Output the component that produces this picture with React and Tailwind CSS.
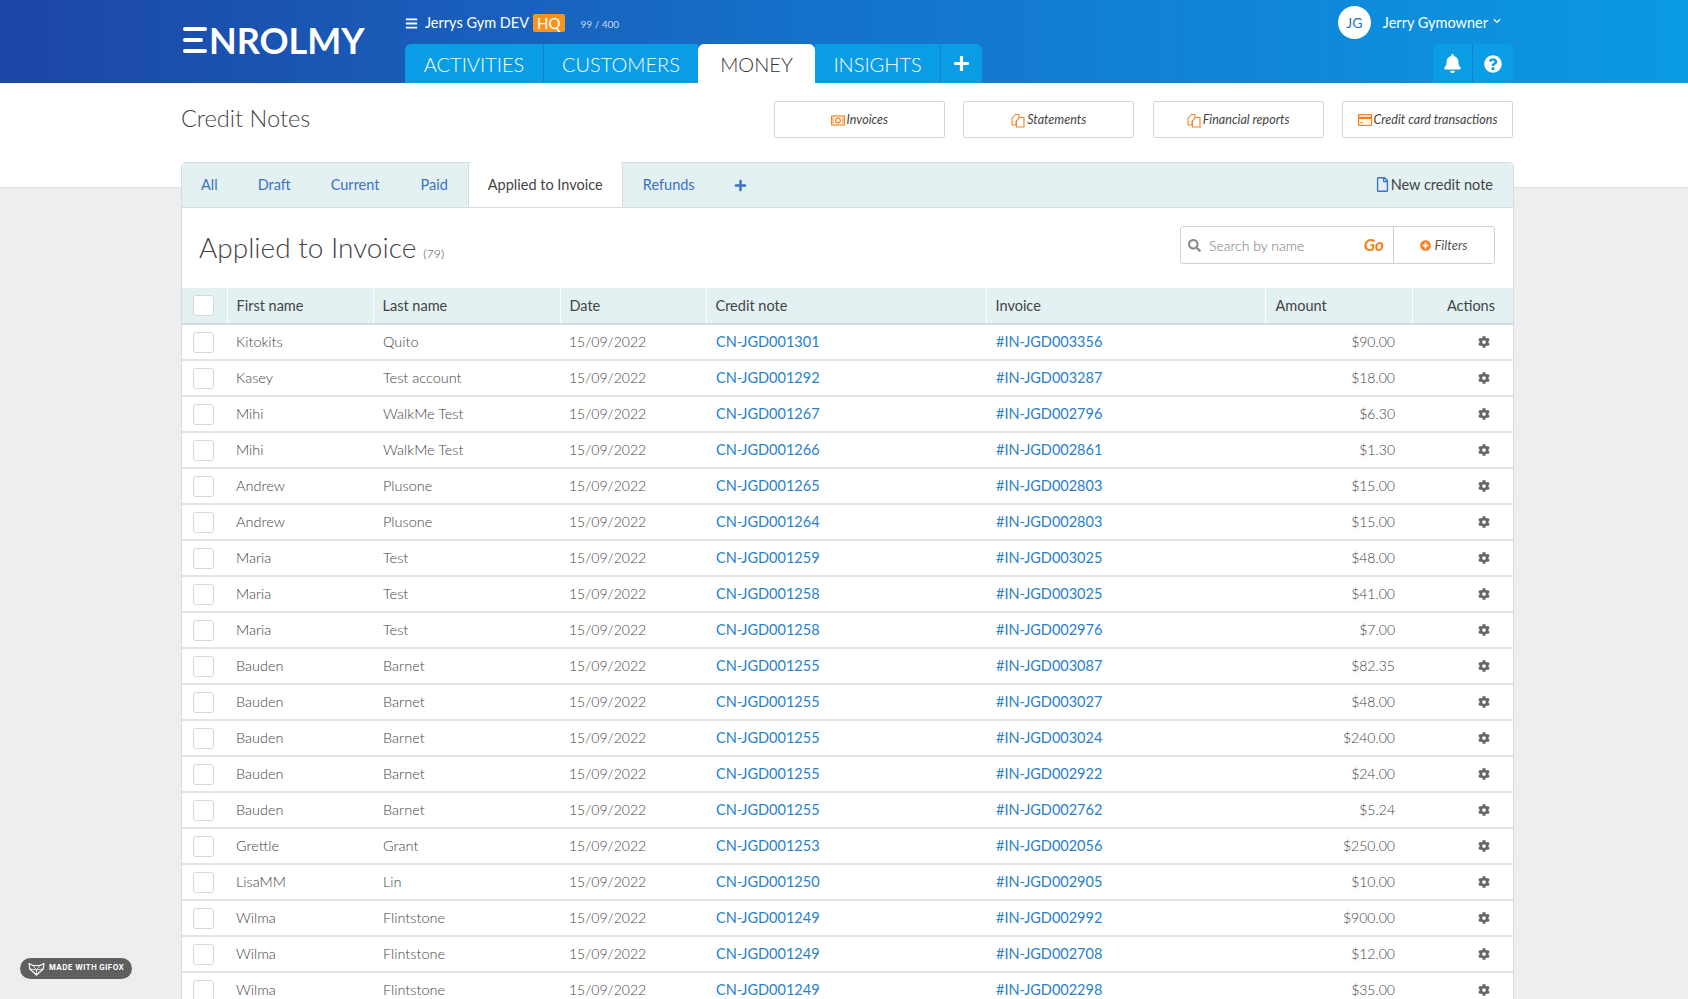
import React from 'react';
import { FaBars, FaBell, FaQuestionCircle, FaPlus, FaCog, FaSearch, FaPlusCircle, FaRegFile, FaChevronDown } from 'react-icons/fa';

const rows = [
  ['Kitokits', 'Quito', 'CN-JGD001301', '#IN-JGD003356', '$90.00'],
  ['Kasey', 'Test account', 'CN-JGD001292', '#IN-JGD003287', '$18.00'],
  ['Mihi', 'WalkMe Test', 'CN-JGD001267', '#IN-JGD002796', '$6.30'],
  ['Mihi', 'WalkMe Test', 'CN-JGD001266', '#IN-JGD002861', '$1.30'],
  ['Andrew', 'Plusone', 'CN-JGD001265', '#IN-JGD002803', '$15.00'],
  ['Andrew', 'Plusone', 'CN-JGD001264', '#IN-JGD002803', '$15.00'],
  ['Maria', 'Test', 'CN-JGD001259', '#IN-JGD003025', '$48.00'],
  ['Maria', 'Test', 'CN-JGD001258', '#IN-JGD003025', '$41.00'],
  ['Maria', 'Test', 'CN-JGD001258', '#IN-JGD002976', '$7.00'],
  ['Bauden', 'Barnet', 'CN-JGD001255', '#IN-JGD003087', '$82.35'],
  ['Bauden', 'Barnet', 'CN-JGD001255', '#IN-JGD003027', '$48.00'],
  ['Bauden', 'Barnet', 'CN-JGD001255', '#IN-JGD003024', '$240.00'],
  ['Bauden', 'Barnet', 'CN-JGD001255', '#IN-JGD002922', '$24.00'],
  ['Bauden', 'Barnet', 'CN-JGD001255', '#IN-JGD002762', '$5.24'],
  ['Grettle', 'Grant', 'CN-JGD001253', '#IN-JGD002056', '$250.00'],
  ['LisaMM', 'Lin', 'CN-JGD001250', '#IN-JGD002905', '$10.00'],
  ['Wilma', 'Flintstone', 'CN-JGD001249', '#IN-JGD002992', '$900.00'],
  ['Wilma', 'Flintstone', 'CN-JGD001249', '#IN-JGD002708', '$12.00'],
  ['Wilma', 'Flintstone', 'CN-JGD001249', '#IN-JGD002298', '$35.00'],
];

const InvoiceIcon = () => (
  <svg width="14" height="11" viewBox="0 0 14 11" fill="none" stroke="#f58220" strokeWidth="1.2">
    <rect x="0.6" y="1" width="12.8" height="9" />
    <circle cx="7" cy="5.5" r="2.4" />
    <path d="M2.2 2.6v5.8M11.8 2.6v5.8" strokeWidth="0.9" />
  </svg>
);

const CopyIcon = () => (
  <svg width="14" height="15" viewBox="0 0 14 15" fill="none" stroke="#f58220" strokeWidth="1.1" strokeLinejoin="round">
    <path d="M1 5.5 4.5 1.5H8V5L5 8.5V12H1Z" />
    <path d="M5.5 8 8.5 4.5H13V14H5.5Z" fill="#fff" />
  </svg>
);

const CardIcon = () => (
  <svg width="14" height="12" viewBox="0 0 14 12">
    <rect x="0.6" y="0.6" width="12.8" height="10.8" fill="none" stroke="#f58220" strokeWidth="1.2" />
    <rect x="0.6" y="2.6" width="12.8" height="2.4" fill="#f58220" />
    <path d="M2.2 8.6h3" stroke="#f58220" strokeWidth="1" />
  </svg>
);

const FoxIcon = () => (
  <svg width="17" height="14" viewBox="0 0 17 14" fill="none" stroke="#fff" strokeWidth="1.2" strokeLinejoin="round">
    <path d="M1 1.5 5 3.5H12L16 1.5 15.2 7 8.5 13 1.8 7Z" />
    <path d="M5 3.5 8.5 8 12 3.5M1.8 7 8.5 8 15.2 7M8.5 8V13" strokeWidth="0.8" />
  </svg>
);

const Checkbox = () => (
  <span className="block w-[21px] h-[21px] rounded-[3px] bg-white border border-[#d5d8da]" />
);

const ActionButton = ({ icon, label }) => (
  <button className="flex items-center justify-center gap-[2px] w-[171px] h-[37px] pt-[1px] bg-white border border-[#d4d7d9] rounded-[2px] text-[12.5px] italic text-[#444]">
    {icon}
    <span>{label}</span>
  </button>
);

const NavTab = ({ label, active, className }) => (
  <div
    className={`flex items-center justify-center h-[39px] pt-[1px] text-[20px] font-light ${
      active ? 'bg-white text-[#333] rounded-t-[6px]' : 'bg-[#0a9de6] text-white'
    } ${className}`}
  >
    {label}
  </div>
);

export default function App() {
  return (
    <div className="relative h-[999px] overflow-hidden bg-[#eeeeee] text-[14.5px] font-['Lato','Liberation_Sans',sans-serif] text-[#444]">
      {/* top bar */}
      <header className="h-[83px] bg-gradient-to-r from-[#1c45a6] via-[#1473cb] to-[#0a9ae4]">
        <div className="flex h-full ml-[183px] w-[1330px]">
          <div className="flex items-center w-[222px] h-[79px] text-white text-[36px] leading-none font-bold">
            <span className="flex flex-col justify-between w-[24px] h-[26px] mr-[2px]">
              <span className="block h-[4px] rounded-full bg-white" />
              <span className="block h-[4px] w-[20px] rounded-full bg-white" />
              <span className="block h-[4px] rounded-full bg-white" />
            </span>
            <span>NROLMY</span>
          </div>
          <div className="flex flex-col justify-end">
            <div className="flex items-center h-[44px] pt-[2px] text-white text-[14.5px]">
              <FaBars className="text-[13px]" />
              <span className="ml-[7px]">Jerrys Gym DEV</span>
              <span className="ml-[4px] px-[4px] h-[18px] leading-[18px] rounded-[2px] bg-[#f7941d] text-[15px]">HQ</span>
              <span className="ml-[16px] mt-[3px] text-[10px] text-[#c5dcf3]">99 / 400</span>
            </div>
            <nav className="flex">
              <NavTab label="ACTIVITIES" className="w-[139px] rounded-tl-[6px] border-r border-[#1580c9]" />
              <NavTab label="CUSTOMERS" className="w-[154px]" />
              <NavTab label="MONEY" active className="w-[117px]" />
              <NavTab label="INSIGHTS" className="w-[126px] border-r border-[#1580c9]" />
              <div className="flex items-center justify-center w-[41px] h-[39px] bg-[#0a9de6] rounded-tr-[6px] text-white text-[17px]">
                <FaPlus />
              </div>
            </nav>
          </div>
          <div className="flex flex-col items-end justify-between ml-auto">
            <div className="flex items-center h-[44px] pt-[1px] mr-[12px] text-white">
              <span className="flex items-center justify-center w-[33px] h-[33px] rounded-full bg-white text-[#1b6fc4] text-[14px]">JG</span>
              <span className="ml-[12px] text-[14.5px] font-normal">Jerry Gymowner</span>
              <FaChevronDown className="ml-[5px] mb-[3px] text-[8px]" />
            </div>
            <div className="flex h-[39px] rounded-t-[6px] overflow-hidden bg-[#0a9de6] text-white">
              <div className="flex items-center justify-center w-[40px] border-r border-[#1580c9] text-[19px]">
                <FaBell />
              </div>
              <div className="flex items-center justify-center w-[40px] text-[18px]">
                <FaQuestionCircle />
              </div>
            </div>
          </div>
        </div>
      </header>

      {/* page title strip */}
      <div className="h-[105px] bg-white border-b border-[#e2e2e2]">
        <div className="flex items-start justify-between ml-[181px] w-[1332px] pt-[18px]">
          <h1 className="-mt-[1px] text-[23.6px] leading-[36px] font-light text-[#444]">Credit Notes</h1>
          <div className="flex gap-[18.4px]">
            <ActionButton icon={<InvoiceIcon />} label="Invoices" />
            <ActionButton icon={<CopyIcon />} label="Statements" />
            <ActionButton icon={<CopyIcon />} label="Financial reports" />
            <ActionButton icon={<CardIcon />} label="Credit card transactions" />
          </div>
        </div>
      </div>

      {/* card */}
      <main className="ml-[181px] w-[1333px] -mt-[26px] bg-white border-x border-t border-[#d5dcdf] rounded-t-[5px]">
        <div className="flex items-end h-[45px] bg-[#e3f1f2] border-b border-[#d5dcdf] rounded-t-[5px] text-[#3b72c4]">
          <div className="flex h-[45px] items-center">
            <span className="ml-[19px]">All</span>
            <span className="ml-[40px]">Draft</span>
            <span className="ml-[40px]">Current</span>
            <span className="ml-[41px]">Paid</span>
            <span className="flex items-center justify-center ml-[20px] w-[155px] h-[45px] bg-white border-x border-[#d5dcdf] rounded-t-[4px] text-[#444]">
              Applied to Invoice
            </span>
            <span className="ml-[20px]">Refunds</span>
            <FaPlus className="ml-[39px] text-[13px] mt-[2px]" />
          </div>
          <div className="flex items-center h-[45px] ml-auto mr-[20px] text-[#444]">
            <FaRegFile className="text-[#3b72c4] text-[15px] mr-[1px]" />
            <span>New credit note</span>
          </div>
        </div>

        <div className="flex items-center justify-between h-[80px] pl-[17px] pr-[18px]">
          <div className="flex items-baseline -mt-[2px]">
            <span className="text-[28px] font-light text-[#444]">Applied to Invoice</span>
            <span className="ml-[7px] text-[12.5px] font-light">(79)</span>
          </div>
          <div className="flex items-center w-[315px] h-[38px] mb-[6px] border border-[#cfd2d4] rounded-[3px]">
            <FaSearch className="ml-[7px] text-[13px] text-[#888]" />
            <span className="ml-[8px] text-[14px] font-light text-[#777]">Search by name</span>
            <span className="ml-auto mr-[9px] text-[17px] font-bold italic text-[#f58220]">Go</span>
            <span className="flex items-center justify-center gap-[3px] w-[101px] h-full pt-[1px] border-l border-[#cfd2d4] text-[13px] italic text-[#555]">
              <FaPlusCircle className="text-[#f58220] text-[11px]" />
              Filters
            </span>
          </div>
        </div>

        <table className="w-full table-fixed border-collapse">
          <thead>
            <tr className="h-[36px] bg-[#e3f1f2] text-left text-[#444] border-b-2 border-[#d5dcdf]">
              <th className="w-[45px] pl-[11px] font-normal border-r border-white"><Checkbox /></th>
              <th className="w-[146px] pl-[9px] font-normal border-r border-white">First name</th>
              <th className="w-[187px] pl-[9px] font-normal border-r border-white">Last name</th>
              <th className="w-[146px] pl-[9px] font-normal border-r border-white">Date</th>
              <th className="w-[280px] pl-[9px] font-normal border-r border-white">Credit note</th>
              <th className="w-[279px] pl-[9px] font-normal border-r border-white">Invoice</th>
              <th className="w-[147px] pl-[10px] font-normal border-r border-white">Amount</th>
              <th className="pr-[18px] font-normal text-right">Actions</th>
            </tr>
          </thead>
          <tbody className="font-light leading-[22px]">
            {rows.map((row, i) => (
              <tr key={i} className="h-[36px] border-b-2 border-[#e3e6e8]">
                <td className="pl-[11px]"><Checkbox /></td>
                <td className="pl-[9px]">{row[0]}</td>
                <td className="pl-[10px]">{row[1]}</td>
                <td className="pl-[9px] text-[14px]">15/09/2022</td>
                <td className="pl-[10px] text-[#2a80cc] font-normal">{row[2]}</td>
                <td className="pl-[10px] text-[#2a80cc] font-normal">{row[3]}</td>
                <td className="pr-[17px] text-right text-[14px]">{row[4]}</td>
                <td className="pr-[23px]">
                  <FaCog className="ml-auto text-[12px] text-[#666]" />
                </td>
              </tr>
            ))}
          </tbody>
        </table>
      </main>

      {/* watermark */}
      <div className="absolute left-[20px] top-[958px] flex items-center gap-[4px] w-[112px] h-[21px] pl-[8px] rounded-full bg-[#5f5f5f] text-white text-[7.3px] font-bold tracking-[0.5px] font-['Inter',sans-serif]">
        <FoxIcon />
        <span>MADE WITH GIFOX</span>
      </div>
    </div>
  );
}
